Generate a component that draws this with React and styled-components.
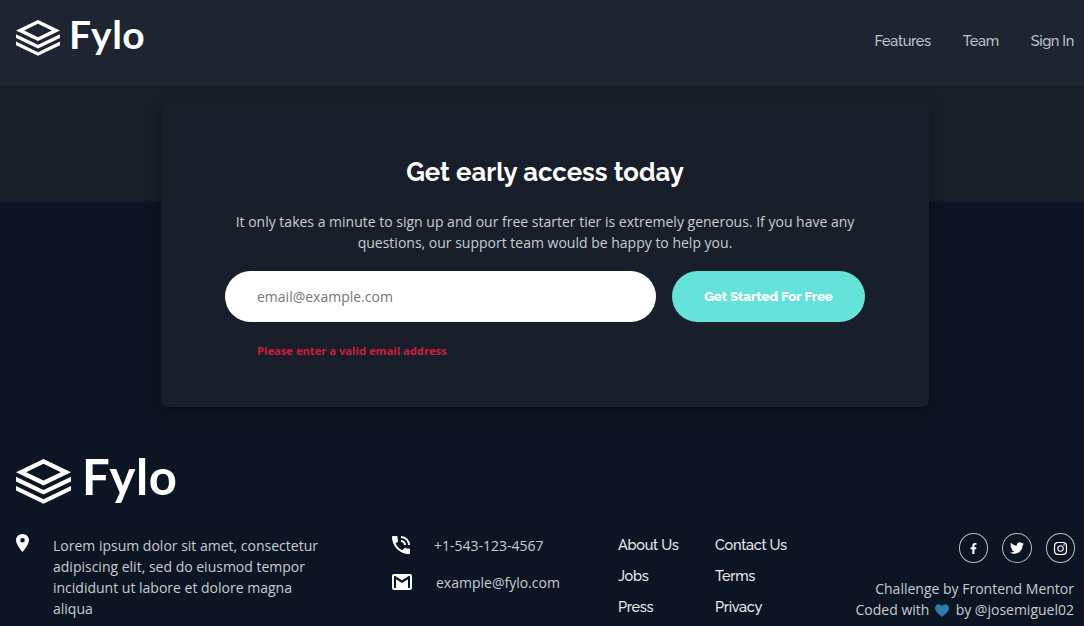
import React from "react";
import styled, { createGlobalStyle } from "styled-components";
import { FaFacebookF, FaTwitter, FaInstagram } from "react-icons/fa";

const Global = createGlobalStyle`
  * { box-sizing: border-box; }
  body { margin: 0; background: #0b1523; overflow: hidden; font-family: "Open Sans", sans-serif; font-size: 14px; line-height: 21px; color: #c9ccd1; }
  p, h1, h2, ul { margin: 0; padding: 0; }
  ul { list-style: none; }
  a { color: inherit; text-decoration: none; }
`;

const Page = styled.div`
  width: 1084px;
  height: 626px;
  overflow: hidden;
`;

const Header = styled.header`
  position: relative;
  height: 86px;
  padding: 18px 10px 0 16px;
  display: flex;
  justify-content: space-between;
  align-items: flex-start;
  background: #1e2431;
  box-shadow: 0 1px 2px rgba(0, 0, 0, 0.25);
`;

const Nav = styled.nav`
  display: flex;
  gap: 32px;
  padding-top: 12px;
`;

const NavLink = styled.a`
  font-family: Raleway, Lato, sans-serif;
  font-size: 14.5px;
  font-weight: 500;
  letter-spacing: -0.35px;
  color: #bfc2c7;
  white-space: nowrap;
`;

const Brand = styled.div`
  display: flex;
  align-items: flex-start;
  color: #fff;
`;

const BrandMark = styled.svg`
  display: block;
  width: ${(p) => (p.$large ? "55px" : "44px")};
  height: ${(p) => (p.$large ? "45px" : "36px")};
  margin-top: ${(p) => (p.$large ? "1px" : "2px")};
`;

const BrandName = styled.span`
  font-family: Lato, sans-serif;
  font-weight: 700;
  font-size: ${(p) => (p.$large ? "49px" : "39px")};
  line-height: ${(p) => (p.$large ? "45px" : "36px")};
  letter-spacing: 0.5px;
  margin-left: ${(p) => (p.$large ? "11px" : "9px")};
  margin-top: ${(p) => (p.$large ? "-4px" : "-2px")};
`;

const Signup = styled.section`
  height: 321px;
  padding-top: 17px;
  background: linear-gradient(#191f28 0 116px, #0b1523 116px);
`;

const Card = styled.div`
  width: 768px;
  height: 304px;
  margin-left: 161px;
  padding: 53px 64px 0;
  border-radius: 7px;
  background: #181f2a;
  box-shadow: 0 3px 15px rgba(0, 0, 0, 0.35);
  text-align: center;
`;

const Title = styled.h2`
  font-family: Raleway, Lato, sans-serif;
  font-weight: 700;
  font-size: 25.7px;
  line-height: 32px;
  color: #fff;
`;

const Lead = styled.p`
  margin-top: 22.5px;
`;

const Form = styled.form`
  display: flex;
  gap: 16px;
  margin-top: 18.9px;
`;

const Email = styled.input`
  width: 431px;
  height: 51px;
  padding: 0 32px;
  border: 0;
  border-radius: 26px;
  background: #fff;
  font: 14px "Open Sans", sans-serif;
  &::placeholder { color: #757575; opacity: 1; }
`;

const Submit = styled.button`
  width: 193px;
  height: 51px;
  padding: 0;
  border: 0;
  border-radius: 26px;
  background: #65e2d9;
  color: #fff;
  font: 800 13.2px Raleway, Lato, sans-serif;
`;

const FormError = styled.p`
  margin: 17.6px 0 0 32px;
  text-align: left;
  font-size: 11.2px;
  font-weight: 700;
  color: #cf1b3f;
`;

const Footer = styled.footer`
  padding: 51px 9px 0 16px;
`;

const FooterRow = styled.div`
  display: grid;
  grid-template-columns: 376px 226px 97px 1fr;
  margin-top: 30px;
`;

const Address = styled.div`
  display: flex;
  gap: 24px;
  p { width: 275px; padding-top: 1px; }
`;

const Glyph = styled.svg`
  display: block;
  flex: none;
  width: ${(p) => p.$w}px;
  height: ${(p) => p.$h}px;
  fill: #fff;
`;

const Contacts = styled.ul`
  padding-top: 1px;
`;

const Contact = styled.li`
  display: flex;
  gap: 24px;
  align-items: center;
  margin-bottom: 16px;
  svg { margin-top: -2px; }
`;

const Links = styled.ul`
  padding-top: 0;
`;

const LinkItem = styled.li`
  margin-bottom: 10px;
  font-family: Raleway, Lato, sans-serif;
  font-size: 14.5px;
  font-weight: 500;
  letter-spacing: -0.3px;
  color: #e6e9ec;
`;

const EndColumns = styled.div`
  display: flex;
  justify-content: space-between;
`;

const Closing = styled.div`
  text-align: right;
`;

const Socials = styled.div`
  display: flex;
  justify-content: flex-end;
  gap: 14px;
  margin: -1px 0 15px;
`;

const Social = styled.a`
  width: 29.5px;
  height: 30px;
  display: grid;
  place-items: center;
  border: 1px solid #b9bec6;
  border-radius: 50%;
  color: #fff;
  font-size: ${(p) => p.$size}px;
`;

const Credit = styled.p`
  padding-right: 1px;
  white-space: nowrap;
`;

const Heart = styled.svg`
  width: 14px;
  height: 13px;
  margin: 0 3px 0 2px;
  vertical-align: -2px;
  fill: #2d7ba8;
`;

function Logo({ large }) {
  return (
    <Brand>
      <BrandMark $large={large} viewBox="0 0 55 45" preserveAspectRatio="none">
        <path fill="#fff" fillRule="evenodd" d="M27.5 0 55 13.2 27.5 26.4 0 13.2ZM27.5 4.7 10.2 13.2 27.5 21.5 44.8 13.2Z" />
        <path fill="#fff" d="M0 17.8 27.5 31 55 17.8V22.4L27.5 35.6 0 22.4ZM0 27 27.5 40.2 55 27V31.6L27.5 44.8 0 31.6Z" />
      </BrandMark>
      <BrandName $large={large}>Fylo</BrandName>
    </Brand>
  );
}

function FooterEnd() {
  return (
    <EndColumns>
      <Links>
        <LinkItem>Contact Us</LinkItem>
        <LinkItem>Terms</LinkItem>
        <LinkItem>Privacy</LinkItem>
      </Links>
      <Closing>
        <Socials>
          <Social $size={11}><FaFacebookF /></Social>
          <Social $size={14}><FaTwitter /></Social>
          <Social $size={15}><FaInstagram /></Social>
        </Socials>
        <Credit>Challenge by Frontend Mentor</Credit>
        <Credit>
          Coded with <Heart viewBox="0 0 14 13"><path d="M7 13C5 11 0 8 0 4 0-.5 5.500-1 7 2.300 8.500-1 14-.5 14 4c0 4-5 7-7 9z" /></Heart> by @josemiguel02
        </Credit>
      </Closing>
    </EndColumns>
  );
}

export default function App() {
  return (
    <Page>
      <Global />
      <Header>
        <Logo />
        <Nav>
          <NavLink>Features</NavLink>
          <NavLink>Team</NavLink>
          <NavLink>Sign In</NavLink>
        </Nav>
      </Header>
      <Signup>
        <Card>
          <Title>Get early access today</Title>
          <Lead>
            It only takes a minute to sign up and our free starter tier is extremely generous. If you have any
            questions, our support team would be happy to help you.
          </Lead>
          <Form>
            <Email placeholder="email@example.com" />
            <Submit type="button">Get Started For Free</Submit>
          </Form>
          <FormError>Please enter a valid email address</FormError>
        </Card>
      </Signup>
      <Footer>
        <Logo large />
        <FooterRow>
          <Address>
            <Glyph $w={13} $h={18} viewBox="0 0 13 18">
              <path d="M6.5 0C2.9 0 0 2.8 0 6.3 0 11 6.5 18 6.5 18S13 11 13 6.3C13 2.8 10.1 0 6.5 0zm0 8.55a2.3 2.3 0 01-2.32-2.25A2.3 2.3 0 016.5 4.05a2.3 2.3 0 012.32 2.25A2.3 2.3 0 016.5 8.55z" />
            </Glyph>
            <p>Lorem ipsum dolor sit amet, consectetur adipiscing elit, sed do eiusmod tempor incididunt ut labore et dolore magna aliqua</p>
          </Address>
          <Contacts>
            <Contact>
              <Glyph $w={18} $h={18} viewBox="3 3 18 18">
                <path d="M19 12h2a9 9 0 0 0-9-9v2c3.87 0 7 3.13 7 7zm-4 0h2c0-2.76-2.24-5-5-5v2c1.66 0 3 1.34 3 3zm5 3.5c-1.25 0-2.45-.2-3.57-.57a1.02 1.02 0 0 0-1.02.24l-2.2 2.2a15.045 15.045 0 0 1-6.59-6.59l2.2-2.21a.96.96 0 0 0 .25-1A11.36 11.36 0 0 1 8.5 4c0-.55-.45-1-1-1H4c-.55 0-1 .45-1 1 0 9.39 7.61 17 17 17 .55 0 1-.45 1-1v-3.5c0-.55-.45-1-1-1z" />
              </Glyph>
              +1-543-123-4567
            </Contact>
            <Contact>
              <Glyph $w={20} $h={16} viewBox="2 4 20 16">
                <path d="M20 4H4c-1.1 0-2 .9-2 2v12c0 1.1.9 2 2 2h16c1.1 0 2-.9 2-2V6c0-1.1-.9-2-2-2zm0 14h-2V9.25L12 13 6 9.25V18H4V6h1.2l6.8 4.25L18.8 6H20v12z" />
              </Glyph>
              example@fylo.com
            </Contact>
          </Contacts>
          <Links>
            <LinkItem>About Us</LinkItem>
            <LinkItem>Jobs</LinkItem>
            <LinkItem>Press</LinkItem>
          </Links>
          <FooterEnd />
        </FooterRow>
      </Footer>
    </Page>
  );
}
